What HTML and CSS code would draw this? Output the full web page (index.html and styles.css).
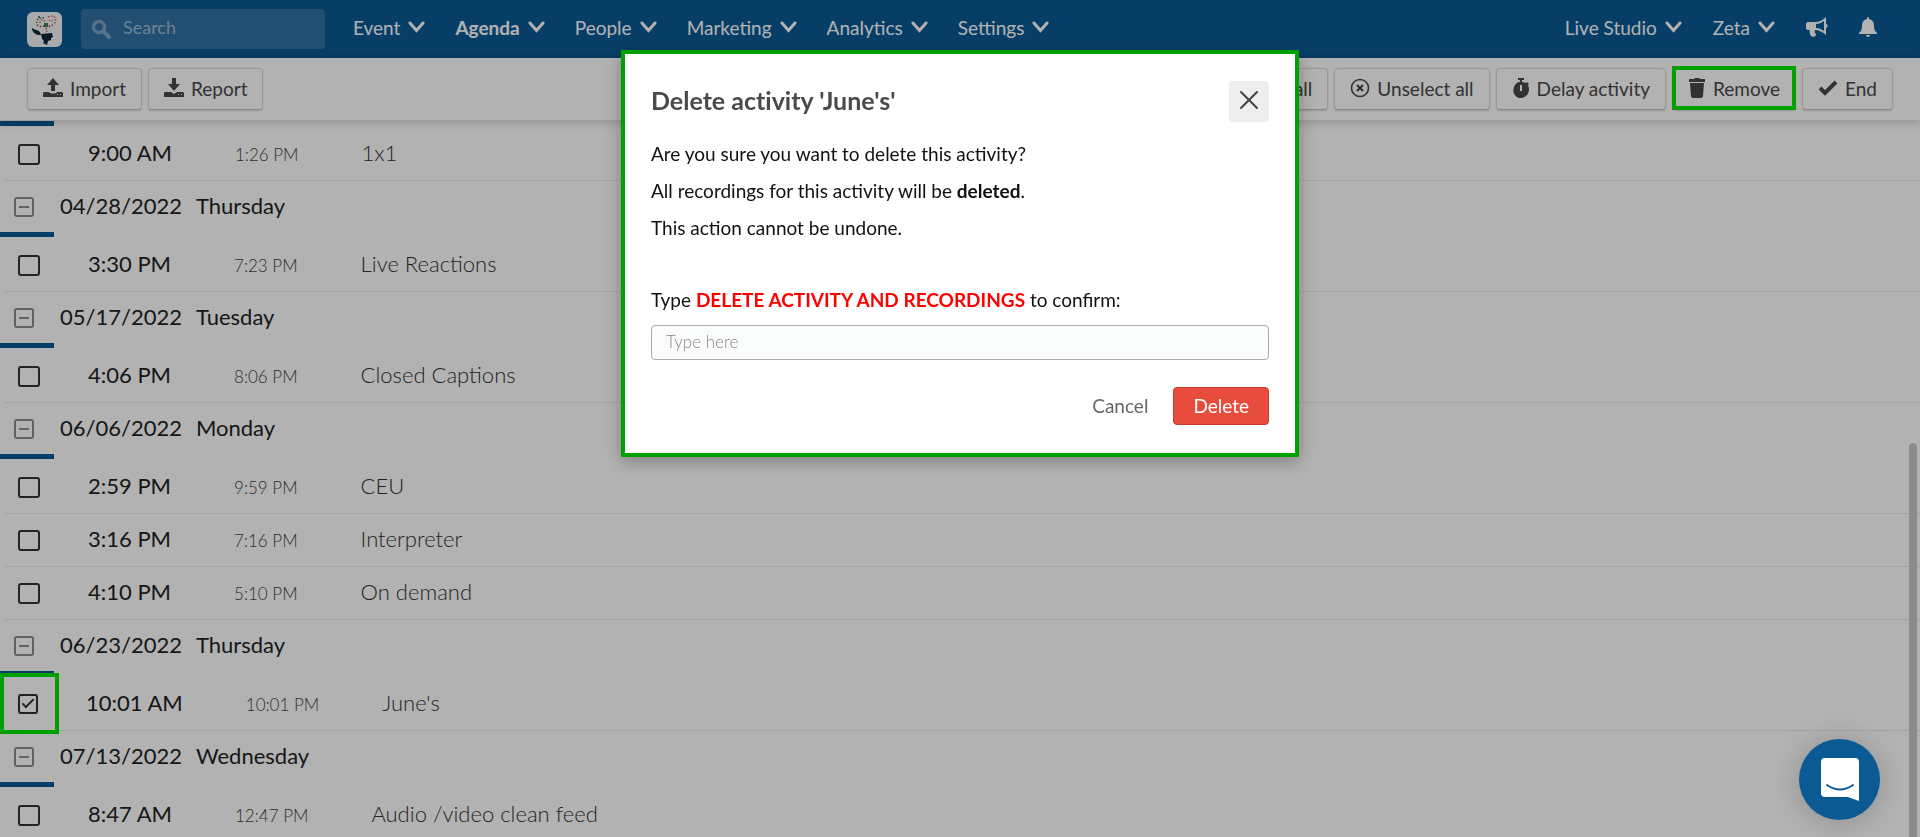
FILE: index.html
```html
<!DOCTYPE html>
<html lang="en">
<head>
  <meta charset="UTF-8">
  <meta name="viewport" content="width=device-width, initial-scale=1">
  <title>Agenda</title>
  <link rel="stylesheet" href="styles.css">
</head>
<body>

<!-- Shared icons -->
<svg class="icon-defs" aria-hidden="true">
  <symbol id="chevron" viewBox="0 0 17 12">
    <path d="M2 2 L8.500 9.500 L15 2" fill="none" stroke="currentColor" stroke-width="3" stroke-linecap="round"/>
  </symbol>
  <symbol id="minus-box" viewBox="0 0 20 20">
    <rect x="1" y="1" width="18" height="18" rx="2" fill="none" stroke="currentColor" stroke-width="2"/>
    <path d="M5 10 H15" stroke="currentColor" stroke-width="2"/>
  </symbol>
</svg>

<div class="page">
  <header class="navbar">
    <a class="logo" href="#" aria-label="Home">
      <svg viewBox="0 0 35 35" width="35" height="35">
        <rect width="35" height="35" rx="6" fill="#f4f4f4"/>
        <g fill="none" stroke-width="1.500" stroke-dasharray="1.500 1.500">
          <path d="M11 14 C8 9 11 5 17 6" stroke="#4d6b5c"/>
          <path d="M21 5 C27 2 31 7 27 12" stroke="#d0604c"/>
          <path d="M13 11 C13 7 17 7 18 10" stroke="#b08050"/>
          <path d="M13 15 C16 12 21 17 27 12" stroke="#a0453c"/>
          <path d="M22 9 C24 7 26 8 25 10" stroke="#d88"/>
          <path d="M19 16 L20 20" stroke="#b55"/>
        </g>
        <path d="M17 11 h4 v4 h-4z" fill="#3c8054"/>
        <circle cx="12" cy="5" r="1" fill="#345"/>
        <path d="M5 16 C8 18 11 18 13 20 L14 23 L11 23 C8 22 5 20 5 16z M14 22 L25 21 L26 25 L24 26 V28 L21 29 L20 33 L16 31 L17 29 L15 27z" fill="#0c2a38"/>
      </svg>
    </a>
    <label class="search">
      <svg viewBox="0 0 20 20" width="20" height="20" aria-hidden="true">
        <circle cx="8" cy="8" r="5.500" fill="none" stroke="currentColor" stroke-width="3.500"/>
        <path d="M12 12 L18 18" stroke="currentColor" stroke-width="4" stroke-linecap="round"/>
      </svg>
      <input type="text" placeholder="Search" aria-label="Search">
    </label>
    <nav class="menu">
      <a href="#">Event <svg class="chevron"><use href="#chevron"/></svg></a>
      <a href="#" class="active">Agenda <svg class="chevron"><use href="#chevron"/></svg></a>
      <a href="#">People <svg class="chevron"><use href="#chevron"/></svg></a>
      <a href="#">Marketing <svg class="chevron"><use href="#chevron"/></svg></a>
      <a href="#">Analytics <svg class="chevron"><use href="#chevron"/></svg></a>
      <a href="#">Settings <svg class="chevron"><use href="#chevron"/></svg></a>
    </nav>
    <nav class="menu menu-right">
      <a href="#">Live Studio <svg class="chevron"><use href="#chevron"/></svg></a>
      <a href="#">Zeta <svg class="chevron"><use href="#chevron"/></svg></a>
      <a href="#" aria-label="Announcements">
        <svg viewBox="0 0 22 20" width="22" height="20">
          <path fill="currentColor" fill-rule="evenodd" d="M20 0 V7 C22 7 22 11 20 11 V18 C17 15 13 13 9 13 C8 15 9 16 10 17 C9 19 10 19 10 19 C8 20 6 20 5 19 C4 17 3 15 4 13 H2 C1 13 0 12 0 11 V7 C0 6 1 5 2 5 H9 C13 5 17 3 20 0z M18 4 C15 6 13 7 10 7 V11 C13 11 15 12 18 14z"/>
        </svg>
      </a>
      <a href="#" aria-label="Notifications">
        <svg viewBox="0 0 18 20" width="18" height="20">
          <path fill="currentColor" d="M9 0 C10 0 10 1 10 2 C14 3 15 6 15 9 C15 13 16 14 18 16 V17 H0 V16 C2 14 3 13 3 9 C3 6 4 3 8 2 C8 1 8 0 9 0z M7 18 H11 C11 19 10 20 9 20 C8 20 7 19 7 18z"/>
        </svg>
      </a>
    </nav>
  </header>

  <div class="toolbar">
    <button type="button" class="btn">
      <svg viewBox="0 0 20 20" width="20" height="20"><path fill="currentColor" fill-rule="evenodd" d="M10 0 L16 7 H12 V13 H8 V7 H4z M1 14 H6 C7 16 13 16 14 14 H19 L20 15 V19 H0 V15z M14 16 V17 H15 V16z M17 16 V17 H18 V16z"/></svg>
      Import
    </button>
    <button type="button" class="btn">
      <svg viewBox="0 0 20 20" width="20" height="20"><path fill="currentColor" fill-rule="evenodd" d="M8 0 H12 V6 H16 L10 13 L4 6 H8z M1 14 H7 L10 16 L13 14 H19 L20 15 V19 H0 V15z M14 16 V17 H15 V16z M17 16 V17 H18 V16z"/></svg>
      Report
    </button>
    <button type="button" class="btn push-right">
      <svg viewBox="0 0 20 20" width="20" height="20"><circle cx="10" cy="10" r="8" fill="none" stroke="currentColor" stroke-width="2"/><path d="M6 10 L9 13 L14 7" fill="none" stroke="currentColor" stroke-width="2"/></svg>
      Select all
    </button>
    <button type="button" class="btn">
      <svg viewBox="0 0 20 20" width="20" height="20"><circle cx="10" cy="10" r="8.500" fill="none" stroke="currentColor" stroke-width="1.600"/><path d="M7 7 L13 13 M13 7 L7 13" stroke="currentColor" stroke-width="2.200"/></svg>
      Unselect all
    </button>
    <button type="button" class="btn">
      <svg viewBox="0 0 18 20" width="18" height="20"><path fill="currentColor" fill-rule="evenodd" d="M6 0 H12 V2 H10 V4 C12 4 13 5 14 5 L15 4 L17 6 L16 7 C19 13 15 20 9 20 C3 20 0 14 2 9 C3 6 5 4 8 4 V2 H6z M8 7 V13 H10 V7z"/></svg>
      Delay activity
    </button>
    <button type="button" class="btn remove">
      <svg viewBox="0 0 18 20" width="18" height="20"><path fill="currentColor" d="M1 1 H6 L7 0 H11 L12 1 H17 V4 H1z M2 5 H16 L15 18 C15 19 14 20 13 20 H5 C4 20 3 19 3 18z"/></svg>
      Remove
    </button>
    <button type="button" class="btn">
      <svg viewBox="0 0 20 20" width="20" height="20"><path d="M2 10 L7 15 L18 4" fill="none" stroke="currentColor" stroke-width="4"/></svg>
      End
    </button>
  </div>

  <main class="agenda">
    <section class="day">
      <div class="day-bar"></div>
      <div class="activity"><input type="checkbox" aria-label="Select 1x1"><span class="start">9:00 AM</span><span class="end">1:26 PM</span><span class="name">1x1</span></div>
    </section>

    <section class="day">
      <h2 class="day-head"><button type="button" aria-label="Collapse day"><svg><use href="#minus-box"/></svg></button><span>04/28/2022</span><span>Thursday</span></h2>
      <div class="day-bar"></div>
      <div class="activity"><input type="checkbox" aria-label="Select Live Reactions"><span class="start">3:30 PM</span><span class="end">7:23 PM</span><span class="name">Live Reactions</span></div>
    </section>

    <section class="day">
      <h2 class="day-head"><button type="button" aria-label="Collapse day"><svg><use href="#minus-box"/></svg></button><span>05/17/2022</span><span>Tuesday</span></h2>
      <div class="day-bar"></div>
      <div class="activity"><input type="checkbox" aria-label="Select Closed Captions"><span class="start">4:06 PM</span><span class="end">8:06 PM</span><span class="name">Closed Captions</span></div>
    </section>

    <section class="day">
      <h2 class="day-head"><button type="button" aria-label="Collapse day"><svg><use href="#minus-box"/></svg></button><span>06/06/2022</span><span>Monday</span></h2>
      <div class="day-bar"></div>
      <div class="activity"><input type="checkbox" aria-label="Select CEU"><span class="start">2:59 PM</span><span class="end">9:59 PM</span><span class="name">CEU</span></div>
      <div class="activity"><input type="checkbox" aria-label="Select Interpreter"><span class="start">3:16 PM</span><span class="end">7:16 PM</span><span class="name">Interpreter</span></div>
      <div class="activity"><input type="checkbox" aria-label="Select On demand"><span class="start">4:10 PM</span><span class="end">5:10 PM</span><span class="name">On demand</span></div>
    </section>

    <section class="day">
      <h2 class="day-head"><button type="button" aria-label="Collapse day"><svg><use href="#minus-box"/></svg></button><span>06/23/2022</span><span>Thursday</span></h2>
      <div class="day-bar"></div>
      <div class="activity selected"><input type="checkbox" aria-label="Select June's" checked><span class="start">10:01 AM</span><span class="end">10:01 PM</span><span class="name">June's</span></div>
    </section>

    <section class="day">
      <h2 class="day-head"><button type="button" aria-label="Collapse day"><svg><use href="#minus-box"/></svg></button><span>07/13/2022</span><span>Wednesday</span></h2>
      <div class="day-bar"></div>
      <div class="activity"><input type="checkbox" aria-label="Select Audio /video clean feed"><span class="start">8:47 AM</span><span class="end">12:47 PM</span><span class="name">Audio /video clean feed</span></div>
    </section>
    <div class="scroll-thumb"></div>
  </main>
</div>

<div class="overlay">
  <form class="modal" role="dialog" aria-labelledby="modal-title">
    <div class="modal-head">
      <h1 id="modal-title">Delete activity 'June's'</h1>
      <button type="button" class="close" aria-label="Close">
        <svg viewBox="0 0 20 20" width="20" height="20"><path d="M2 2 L18 18 M18 2 L2 18" stroke="currentColor" stroke-width="2" stroke-linecap="round"/></svg>
      </button>
    </div>
    <p>Are you sure you want to delete this activity?</p>
    <p>All recordings for this activity will be <b>deleted</b>.</p>
    <p>This action cannot be undone.</p>
    <label for="confirm">Type <b class="phrase">DELETE ACTIVITY AND RECORDINGS</b> to confirm:</label>
    <input type="text" id="confirm" placeholder="Type here">
    <div class="modal-actions">
      <button type="button" class="cancel">Cancel</button>
      <button type="submit" class="delete">Delete</button>
    </div>
  </form>
</div>

<button type="button" class="chat" aria-label="Open chat">
  <svg viewBox="0 0 38 43" width="38" height="43">
    <path fill="#fff" d="M4 0 H34 Q38 0 38 4 V43 L27 39 H4 Q0 39 0 35 V4 Q0 0 4 0z"/>
    <path d="M6 27 Q19 36 32 27" fill="none" stroke="#0b5a94" stroke-width="2" stroke-linecap="round"/>
  </svg>
</button>

</body>
</html>
```

FILE: styles.css
```css
*,
*::before,
*::after {
  box-sizing: border-box;
}

body {
  margin: 0;
  font-family: Lato, "Open Sans", sans-serif;
  font-size: 19px;
  color: #222;
  background: #fff;
}

button,
input {
  font-family: inherit;
  font-size: inherit;
  color: inherit;
}

a {
  color: inherit;
  text-decoration: none;
}

.icon-defs {
  display: none;
}

.page {
  display: flex;
  flex-direction: column;
  height: 100vh;
  overflow: hidden;
}

/* Top bar */
.navbar {
  display: flex;
  align-items: center;
  height: 58px;
  padding: 0 43px 0 27px;
  background: #0b5a94;
  color: #fff;
  flex-shrink: 0;
}

.logo {
  display: flex;
  margin-right: 19px;
}

.search {
  display: flex;
  align-items: center;
  width: 244px;
  height: 40px;
  margin-right: 28px;
  padding: 0 10px;
  gap: 10px;
  border-radius: 4px;
  background: #3271a2;
  color: #7ba4c4;
}

.search svg {
  flex-shrink: 0;
}

.search input {
  width: 100%;
  padding: 0 2px 4px;
  border: 0;
  outline: 0;
  background: none;
  font-size: 18px;
}

.search input::placeholder {
  color: #9dbcd4;
}

.menu {
  display: flex;
  align-items: center;
  gap: 30px;
  padding-bottom: 4px;
}

.menu a {
  display: flex;
  align-items: center;
  gap: 8px;
}

.menu .active {
  font-weight: 700;
}

.menu-right {
  margin-left: auto;
  gap: 31px;
}

.chevron {
  width: 17px;
  height: 12px;
}

/* Action buttons */
.toolbar {
  display: flex;
  align-items: center;
  gap: 6px;
  height: 62px;
  padding: 0 27px;
  background: #fff;
  box-shadow: 0 2px 10px rgba(0, 0, 0, 0.2);
  position: relative;
  flex-shrink: 0;
}

.btn {
  display: flex;
  align-items: center;
  gap: 7px;
  height: 42px;
  padding: 0 15px 2px;
  border: 1px solid #dcdcdc;
  border-bottom-color: #c4c4c4;
  border-radius: 4px;
  background: #fff;
  box-shadow: 0 1px 2px rgba(0, 0, 0, 0.15);
  color: #484848;
}

.push-right {
  margin-left: auto;
}

.remove {
  position: relative;
}

/* Green frames sit over the dimmed page */
.remove::after,
.selected::before {
  content: "";
  position: absolute;
  z-index: 20;
  border: 4px solid #00a000;
}

.remove::after {
  inset: -3px -1px -1px;
}

/* Agenda list */
.agenda {
  flex: 1;
  padding-top: 1px;
  overflow: hidden;
}

.day-head {
  display: flex;
  align-items: center;
  gap: 14px;
  height: 51px;
  margin: 0;
  padding-left: 14px;
  font-size: 22px;
  font-weight: 400;
}

.day-head button {
  display: flex;
  margin-right: 12px;
  padding: 0;
  border: 0;
  background: none;
  color: #8c8c8c;
}

.day-head svg {
  width: 20px;
  height: 20px;
}

.day-head span,
.activity span {
  padding-bottom: 3px;
}

.day-bar {
  width: 54px;
  height: 5px;
  margin-bottom: 2px;
  background: #0b5a94;
}

.activity {
  display: flex;
  align-items: center;
  gap: 63px;
  height: 53px;
  margin-left: 4px;
  padding-left: 14px;
  border-bottom: 1px solid #ebebeb;
  font-size: 22px;
}

.activity input {
  appearance: none;
  width: 22px;
  height: 21px;
  margin: 0 -15px 0 0;
  border: 2px solid #333;
  border-radius: 3px;
}

.activity input:checked {
  display: flex;
  justify-content: center;
  width: 20px;
  height: 20px;
}

.activity input:checked::before {
  content: "";
  width: 6px;
  height: 12px;
  border: solid #333;
  border-width: 0 2px 2px 0;
  transform: rotate(45deg);
}

.activity .end {
  font-size: 17px;
  font-weight: 300;
  color: #444;
  padding-bottom: 0;
}

.name {
  font-weight: 300;
  color: #333;
}

.selected {
  position: relative;
}

.selected::before {
  top: -5px;
  left: -4px;
  width: 59px;
  height: 61px;
}

.scroll-thumb {
  position: absolute;
  top: 443px;
  right: 3px;
  bottom: 0;
  width: 8px;
  border-radius: 4px 4px 0 0;
  background: #c8c8c8;
}

/* Confirmation dialog */
.overlay {
  position: fixed;
  inset: 0;
  z-index: 10;
  display: flex;
  justify-content: center;
  align-items: flex-start;
  padding-top: 50px;
  background: rgba(0, 0, 0, 0.3);
}

.modal {
  display: flex;
  flex-direction: column;
  width: 678px;
  padding: 27px 26px 28px;
  border: 4px solid #00a000;
  background: #fff;
  box-shadow: 0 4px 16px rgba(0, 0, 0, 0.3);
  color: #111;
}

.modal-head {
  display: flex;
  justify-content: space-between;
  margin-bottom: 13px;
}

.modal h1 {
  margin: 0;
  font-size: 25px;
  font-weight: 700;
  font-variant-ligatures: none;
  line-height: 38px;
  color: #4a4a4a;
}

.close {
  display: flex;
  align-items: center;
  justify-content: center;
  width: 40px;
  height: 41px;
  padding: 0 0 4px;
  border: 0;
  border-radius: 4px;
  background: #eee;
  color: #444;
}

.modal p,
.modal label {
  margin: 0;
  line-height: 37px;
}

.modal label {
  margin-top: 35px;
}

.phrase {
  color: #f00;
}

.modal input {
  height: 35px;
  margin-top: 7px;
  padding: 0 14px 2px;
  border: 1px solid #aaa;
  border-radius: 4px;
  background: #fafbfb;
  font-size: 17px;
}

.modal input::placeholder {
  color: #888;
  font-weight: 300;
}

.modal-actions {
  display: flex;
  justify-content: flex-end;
  margin-top: 27px;
  gap: 6px;
}

.modal-actions button {
  height: 38px;
  padding: 0 19px 2px;
  border: 0;
  background: none;
  color: #666;
}

.modal-actions .delete {
  border: 1px solid #c83c2e;
  border-radius: 4px;
  background: #e84c3d;
  color: #fff;
}

/* Chat launcher */
.chat {
  position: fixed;
  right: 40px;
  bottom: 17px;
  z-index: 40;
  display: flex;
  align-items: center;
  justify-content: center;
  width: 81px;
  height: 81px;
  padding: 0;
  border: 0;
  border-radius: 50%;
  background: #0b5a94;
  box-shadow: 0 2px 28px rgba(0, 0, 0, 0.2);
}
```
